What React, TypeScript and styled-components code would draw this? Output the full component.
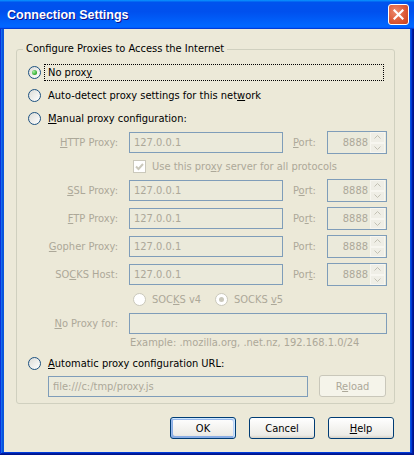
import React from 'react';
import styled, { createGlobalStyle } from 'styled-components';

const DISABLED = '#aca899';

const GlobalStyle = createGlobalStyle`
  html, body {
    margin: 0;
    padding: 0;
    background: #ffffff;
  }
  body {
    font-family: "DejaVu Sans Condensed", "Liberation Sans", Arial, sans-serif;
    font-size: 11px;
    color: #000000;
  }
`;

const Window = styled.div`
  width: 414px;
  height: 455px;
  box-sizing: border-box;
  display: flex;
  flex-direction: column;
  background: #0855dd;
  box-shadow: inset -1px -1px #00138c, inset 1px 1px #0831d9, inset -2px -2px #001ea0,
    inset 2px 2px #166aee, inset -3px -3px #003bda, inset 3px 3px #0855dd;
`;

const TitleBar = styled.div`
  flex: 0 0 29px;
  display: flex;
  align-items: center;
  justify-content: space-between;
  padding: 0 5px 0 7px;
  background: linear-gradient(180deg, #0997ff, #0053ee 8%, #0050ee 40%, #0066ff 88%,
    #0066ff 93%, #005bff 95%, #003dd7 96%, #003dd7);
`;

const Title = styled.div`
  font-family: "Liberation Sans", Arial, sans-serif;
  font-weight: bold;
  font-size: 12.5px;
  color: #ffffff;
  text-shadow: 1px 1px #0f1089;
`;

const CloseButton = styled.div`
  width: 21px;
  height: 21px;
  box-sizing: border-box;
  border: 1px solid #ffffff;
  border-radius: 3px;
  background: radial-gradient(circle at 35% 35%, #ec8a6e, #dd5a37 55%, #c7411e);
  display: flex;
  align-items: center;
  justify-content: center;
`;

const Client = styled.div`
  flex: 1;
  margin: 0 4px 3px 4px;
  background: #ece9d8;
  padding: 13px 16px 0 12px;
  display: flex;
  flex-direction: column;
`;

const GroupBox = styled.fieldset`
  margin: 0;
  padding: 0 0 6px 0;
  width: 379px;
  min-width: 0;
  box-sizing: border-box;
  border: 1px solid #d0d0bf;
  border-radius: 3px;
`;

const Legend = styled.legend`
  margin-left: 6px;
  padding: 0 3px;
  line-height: 14px;
`;

const RadioRow = styled.div<{ $top?: number }>`
  display: flex;
  align-items: center;
  height: 22px;
  padding: 0 10px 0 11px;
  margin-top: ${p => p.$top ?? 1}px;
`;

const RadioCircle = styled.span<{ $checked?: boolean; $disabled?: boolean }>`
  flex: 0 0 13px;
  width: 13px;
  height: 13px;
  box-sizing: border-box;
  border-radius: 50%;
  border: 1px solid ${p => (p.$disabled ? '#cac8bb' : '#1c5180')};
  background: ${p => (p.$disabled ? '#ffffff' : 'linear-gradient(135deg, #dcdcd7, #ffffff)')};
  display: flex;
  align-items: center;
  justify-content: center;

  &::after {
    content: '';
    display: ${p => (p.$checked ? 'block' : 'none')};
    width: 5px;
    height: 5px;
    border-radius: 50%;
    background: ${p => (p.$disabled ? '#cac8bb' : 'radial-gradient(circle at 35% 35%, #a6f2a3, #21a121 75%)')};
  }
`;

const RadioLabel = styled.span<{ $focus?: boolean }>`
  flex: 1;
  margin-left: 3px;
  padding: 1px 3px;
  line-height: 13px;
  border: 1px dotted ${p => (p.$focus ? '#000000' : 'transparent')};
`;

const Key = styled.span`
  text-decoration: underline;
`;

const ProxyGrid = styled.div`
  display: grid;
  grid-template-columns: 112px 154px 44px 60px;
  row-gap: 5px;
  align-items: center;
  margin-top: 2px;
  color: ${DISABLED};
`;

const FieldLabel = styled.span`
  text-align: right;
  padding-right: 11px;
  white-space: nowrap;
`;

const PortLabel = styled.span`
  padding-left: 10px;
`;

const TextField = styled.input<{ $width?: number }>`
  width: ${p => (p.$width ? `${p.$width}px` : '100%')};
  height: 21px;
  box-sizing: border-box;
  margin: 0;
  padding: 0 4px;
  border: 1px solid #7f9db9;
  background: #ebeadb;
  color: ${DISABLED};
  font: inherit;
  font-size: 11px;
`;

const WideField = styled(TextField)`
  grid-column: 2 / -1;
`;

const Spinner = styled.div`
  display: flex;
  width: 60px;
  height: 23px;
  box-sizing: border-box;
  border: 1px solid #7f9db9;
  background: #ebeadb;
`;

const SpinValue = styled.span`
  flex: 1;
  text-align: right;
  padding-right: 2px;
  line-height: 21px;
`;

const SpinButtons = styled.div`
  display: flex;
  flex-direction: column;
  width: 15px;
  margin: 0 1px 0 0;
`;

const SpinButton = styled.span`
  flex: 1;
  display: flex;
  align-items: center;
  justify-content: center;
  border: 1px solid #f7f6f0;
  background: #efeee6;
`;

const CheckRow = styled.div`
  grid-column: 2 / -1;
  display: flex;
  align-items: center;
  height: 15px;
  padding-left: 4px;
  gap: 6px;
`;

const CheckBox = styled.span`
  flex: 0 0 13px;
  width: 13px;
  height: 13px;
  box-sizing: border-box;
  border: 1px solid #cac8bb;
  background: #ffffff;
  display: flex;
  align-items: center;
  justify-content: center;
`;

const SocksRow = styled.div`
  grid-column: 2 / -1;
  display: grid;
  grid-template-columns: 82px auto;
  align-items: center;
  height: 17px;
  padding-left: 4px;
`;

const SocksOption = styled.span`
  display: flex;
  align-items: center;
  gap: 6px;
`;

const Hint = styled.div`
  grid-column: 2 / -1;
  margin-top: -3px;
  padding-left: 1px;
  line-height: 13px;
`;

const UrlRow = styled.div`
  display: flex;
  align-items: center;
  gap: 11px;
  height: 22px;
  padding-left: 31px;
  margin-top: 1px;
`;

const ButtonRow = styled.div`
  display: flex;
  justify-content: flex-end;
  gap: 13px;
  margin-top: 13px;
`;

const Button = styled.button<{ $default?: boolean; $width?: number }>`
  width: ${p => p.$width ?? 66}px;
  height: 22px;
  margin: 0;
  padding: 0;
  box-sizing: border-box;
  font: inherit;
  font-size: 11px;
  color: #000000;
  border: 1px solid #003c74;
  border-radius: 3px;
  background: linear-gradient(180deg, #ffffff, #ecebe6 86%, #d6d0c5);
  box-shadow: ${p =>
    p.$default
      ? 'inset -1px 1px #cee7ff, inset 1px 2px #98b8ea, inset -2px 2px #bcd4f6, inset 1px -1px #89ade4, inset 2px -2px #89ade4'
      : 'none'};

  &:disabled {
    color: ${DISABLED};
    border-color: #c9c7ba;
    background: #f5f4ea;
  }
`;

const Arrow = ({ up }: { up?: boolean }) => (
  <svg width="7" height="4" viewBox="0 0 7 4">
    <path d={up ? 'M0.5 3.5 L3.5 0.5 L6.5 3.5' : 'M0.5 0.5 L3.5 3.5 L6.5 0.5'} stroke="#c2c0b3" fill="none" />
  </svg>
);

function PortSpinner() {
  return (
    <Spinner>
      <SpinValue>8888</SpinValue>
      <SpinButtons>
        <SpinButton><Arrow up /></SpinButton>
        <SpinButton><Arrow /></SpinButton>
      </SpinButtons>
    </Spinner>
  );
}

type RowProps = { label: React.ReactNode; port: React.ReactNode };

function ProxyRow({ label, port }: RowProps) {
  return (
    <>
      <FieldLabel>{label}</FieldLabel>
      <TextField disabled readOnly value="127.0.0.1" />
      <PortLabel>{port}</PortLabel>
      <PortSpinner />
    </>
  );
}

export default function App() {
  return (
    <Window>
      <GlobalStyle />
      <TitleBar>
        <Title>Connection Settings</Title>
        <CloseButton>
          <svg width="11" height="11" viewBox="0 0 11 11">
            <path d="M1.5 1.5 L9.5 9.5 M9.5 1.5 L1.5 9.5" stroke="#ffffff" strokeWidth="2.2" strokeLinecap="square" />
          </svg>
        </CloseButton>
      </TitleBar>
      <Client>
        <GroupBox>
          <Legend>Configure Proxies to Access the Internet</Legend>
          <RadioRow $top={5}>
            <RadioCircle $checked />
            <RadioLabel $focus>No prox<Key>y</Key></RadioLabel>
          </RadioRow>
          <RadioRow>
            <RadioCircle />
            <RadioLabel>Auto-detect proxy settings for this net<Key>w</Key>ork</RadioLabel>
          </RadioRow>
          <RadioRow>
            <RadioCircle />
            <RadioLabel><Key>M</Key>anual proxy configuration:</RadioLabel>
          </RadioRow>
          <ProxyGrid>
            <ProxyRow label={<><Key>H</Key>TTP Proxy:</>} port={<><Key>P</Key>ort:</>} />
            <CheckRow>
              <CheckBox>
                <svg width="9" height="8" viewBox="0 0 9 8">
                  <path d="M1 3.5 L3.5 6 L8 1" stroke="#cac8bb" strokeWidth="2" fill="none" />
                </svg>
              </CheckBox>
              <span>Use this pro<Key>x</Key>y server for all protocols</span>
            </CheckRow>
            <ProxyRow label={<><Key>S</Key>SL Proxy:</>} port={<>P<Key>o</Key>rt:</>} />
            <ProxyRow label={<><Key>F</Key>TP Proxy:</>} port={<>Po<Key>r</Key>t:</>} />
            <ProxyRow label={<><Key>G</Key>opher Proxy:</>} port="Port:" />
            <ProxyRow label={<>SO<Key>C</Key>KS Host:</>} port={<>Por<Key>t</Key>:</>} />
            <SocksRow>
              <SocksOption>
                <RadioCircle $disabled />
                <span>SOC<Key>K</Key>S v4</span>
              </SocksOption>
              <SocksOption>
                <RadioCircle $disabled $checked />
                <span>SOCKS <Key>v</Key>5</span>
              </SocksOption>
            </SocksRow>
            <FieldLabel><Key>N</Key>o Proxy for:</FieldLabel>
            <WideField disabled readOnly value="" />
            <Hint>Example: .mozilla.org, .net.nz, 192.168.1.0/24</Hint>
          </ProxyGrid>
          <RadioRow $top={3}>
            <RadioCircle />
            <RadioLabel><Key>A</Key>utomatic proxy configuration URL:</RadioLabel>
          </RadioRow>
          <UrlRow>
            <TextField disabled readOnly value="file:///c:/tmp/proxy.js" $width={260} />
            <Button disabled $width={67}>R<Key>e</Key>load</Button>
          </UrlRow>
        </GroupBox>
        <ButtonRow>
          <Button $default>OK</Button>
          <Button>Cancel</Button>
          <Button><Key>H</Key>elp</Button>
        </ButtonRow>
      </Client>
    </Window>
  );
}
